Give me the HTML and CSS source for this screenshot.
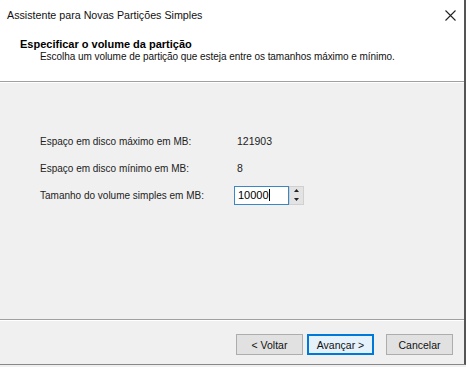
FILE: index.html
```html
<!DOCTYPE html>
<html lang="pt">
<head>
<meta charset="utf-8">
<link rel="stylesheet" href="styles.css">
</head>
<body>
<div class="window">
  <div class="top">
    <div class="titlebar">
      <span class="title">Assistente para Novas Partições Simples</span>
      <svg class="close" width="11" height="11" viewBox="0 0 11 11"><path d="M0.5 0.5 L10.5 10.5 M10.5 0.5 L0.5 10.5" stroke="#222" stroke-width="1.1" fill="none"/></svg>
    </div>
    <div class="header">
      <div class="h-title">Especificar o volume da partição</div>
      <div class="h-sub">Escolha um volume de partição que esteja entre os tamanhos máximo e mínimo.</div>
    </div>
  </div>
  <div class="body">
    <div class="row"><span class="label">Espaço em disco máximo em MB:</span><span class="value">121903</span></div>
    <div class="row"><span class="label">Espaço em disco mínimo em MB:</span><span class="value">8</span></div>
    <div class="row"><span class="label">Tamanho do volume simples em MB:</span>
      <span class="spin">
        <span class="input">10000<span class="caret"></span></span>
        <span class="arrows">
          <span class="arr"><svg width="5" height="3" viewBox="0 0 5 3"><path d="M0 3 L2.5 0 L5 3 Z" fill="#222"/></svg></span>
          <span class="arr"><svg width="5" height="3" viewBox="0 0 5 3"><path d="M0 0 L2.5 3 L5 0 Z" fill="#222"/></svg></span>
        </span>
      </span>
    </div>
  </div>
  <div class="footer">
    <button class="btn">&lt; Voltar</button>
    <button class="btn primary">Avançar &gt;</button>
    <button class="btn cancel">Cancelar</button>
  </div>
</div>
</body>
</html>
```
FILE: styles.css
```css
html, body { margin: 0; padding: 0; }
body {
  width: 466px; height: 367px; overflow: hidden;
  font-family: "Liberation Sans", Arial, sans-serif;
  font-size: 10px; color: #222; background: #f0f0f0;
}
.window {
  width: 464px; height: 364px;
  border-right: 2px solid #555;
  border-bottom: 1px solid #888;
  display: flex; flex-direction: column;
  background: #f0f0f0;
}
.top { background: #fff; height: 81px; border-bottom: 1px solid #a0a0a0; box-shadow: 0 1px 0 #fff; }
.titlebar { height: 30px; display: flex; align-items: center; justify-content: space-between; padding: 0 8px 0 7px; }
.title { font-size: 10.7px; color: #111; }
.header { padding: 8px 0 0 20px; }
.h-title { font-weight: bold; font-size: 11px; color: #000; }
.h-sub { padding: 1px 0 0 20px; font-size: 10px; color: #111; letter-spacing: -0.05px; }
.body { height: 238px; padding: 52px 0 0 40px; box-sizing: border-box; border-bottom: 1px solid #a0a0a0; box-shadow: 0 1px 0 #fff; display: flex; flex-direction: column; gap: 13px; }
.row { display: flex; align-items: center; height: 14px; }
.label { width: 197px; }
.value { font-size: 10.5px; }
.spin { display: flex; align-items: stretch; margin-left: -3px; }
.input { width: 50px; height: 17px; border: 1px solid #3a87c8; background: #fff; font-size: 11px; line-height: 17px; padding-left: 3px; display: flex; align-items: center; color: #000; }
.caret { display: inline-block; width: 1px; height: 12px; background: #000; }
.arrows { display: flex; flex-direction: column; width: 15px; height: 19px; background: #e3e3e3; border: 1px solid #d0d0d0; box-sizing: border-box; }
.arr { flex: 1; display: flex; align-items: center; justify-content: center; }
.footer { flex: 1; display: flex; align-items: center; justify-content: flex-end; padding: 5px 11px 0 0; gap: 4px; }
.btn { font-family: inherit; font-size: 10.5px; width: 67px; height: 21px; background: #e1e1e1; border: 1px solid #adadad; color: #111; padding: 0; }
.primary { border: 1px solid #0078d7; box-shadow: inset 0 0 0 1px #0078d7; background: #e5f1fb; }
.cancel { margin-left: 8px; }
```
